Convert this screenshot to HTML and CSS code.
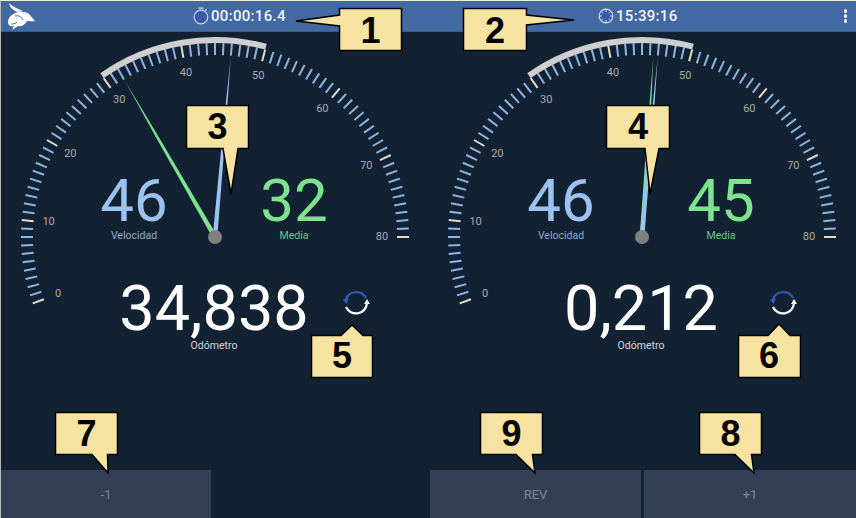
FILE: index.html
```html
<!DOCTYPE html>
<html lang="en">
<head>
  <meta charset="UTF-8" />
  <title>Odometro</title>
  <link rel="stylesheet" href="styles.css">
</head>
<body>
  <div class="page">
    <header class="top-bar">
      <div class="logo-area">
        <svg class="logo" viewBox="0 0 32 30" width="32" height="30">
          <path fill="#fff" d="M5 2 C9 6 14 8 19 10 L14 11 C10 10 6 7 5 2 Z"/>
          <path fill="#fff" d="M8 14 C13 10 21 10 25 13 L31 20 C28 21 25 20 23 20 C21 24 17 26 14 25 L8 29 L10 25 C6 26 4 24 4 21 C4 18 6 15 8 14 Z"/>
          <path fill="none" stroke="#4369a2" stroke-width="1" d="M11 15 C15 14 18 16 19 19 M13 21 C11 23 9 23 7 23"/>
        </svg>
      </div>
      <div class="clock">
        <svg viewBox="0 0 16 18" width="16" height="18">
          <rect x="5.5" y="0.5" width="5" height="1.3" fill="#c9d6ea"/>
          <path d="M12 3.5l1.5-1.2" stroke="#c9d6ea" stroke-width="1.2"/>
          <circle cx="8" cy="10" r="6.8" fill="#3a5ca8" stroke="#c9d6ea" stroke-width="1.2"/>
        </svg>
        <span>00:00:16.4</span>
      </div>
      <div class="clock">
        <svg viewBox="0 0 16 16" width="16" height="16">
          <circle cx="8" cy="8" r="6.8" fill="#3a5ca8" stroke="#d5deee" stroke-width="1.2"/>
          <path d="M8 2v2M8 12v2M2 8h2M12 8h2M3.8 3.8l1.4 1.4M10.8 10.8l1.4 1.4M3.8 12.2l1.4-1.4M10.8 5.2l1.4-1.4" stroke="#d5deee" stroke-width="1"/>
        </svg>
        <span>15:39:16</span>
      </div>
      <div class="menu-dots"><i></i><i></i><i></i></div>
    </header>

    <main class="panels">
      <section class="panel">
        <svg class="gauge" data-speed="5" data-avg="-30" viewBox="0 0 428 366" width="428" height="366"></svg>
        <div class="readings">
          <div class="speed-row">
            <div class="reading speed"><b>46</b><span>Velocidad</span></div>
            <div class="reading average"><b>32</b><span>Media</span></div>
          </div>
          <div class="odo-row">
            <div class="odo"><b>34,838</b><span>Odómetro</span></div>
            <svg class="reset" viewBox="0 0 28 28" width="28" height="28">
              <path d="M3.5 12 A11 11 0 0 1 24 9" fill="none" stroke="#3559b5" stroke-width="2.2"/>
              <path d="M0.8 10.5 L7 9.5 L4.5 15 Z" fill="#3559b5"/>
              <path d="M25 14 A11 11 0 0 1 4 18" fill="none" stroke="#fff" stroke-width="2.2"/>
              <path d="M22 15 L25 10 L28 15 Z" fill="#fff"/>
            </svg>
          </div>
        </div>
      </section>
      <section class="panel">
        <svg class="gauge" data-speed="5" data-avg="3.6" viewBox="0 0 428 366" width="428" height="366"></svg>
        <div class="readings">
          <div class="speed-row">
            <div class="reading speed"><b>46</b><span>Velocidad</span></div>
            <div class="reading average"><b>45</b><span>Media</span></div>
          </div>
          <div class="odo-row">
            <div class="odo"><b>0,212</b><span>Odómetro</span></div>
            <svg class="reset" viewBox="0 0 28 28" width="28" height="28">
              <path d="M3.5 12 A11 11 0 0 1 24 9" fill="none" stroke="#3559b5" stroke-width="2.2"/>
              <path d="M0.8 10.5 L7 9.5 L4.5 15 Z" fill="#3559b5"/>
              <path d="M25 14 A11 11 0 0 1 4 18" fill="none" stroke="#fff" stroke-width="2.2"/>
              <path d="M22 15 L25 10 L28 15 Z" fill="#fff"/>
            </svg>
          </div>
        </div>
      </section>
    </main>

    <footer class="button-row">
      <button class="pad-btn">-1</button>
      <div></div>
      <button class="pad-btn">REV</button>
      <button class="pad-btn">+1</button>
    </footer>
  </div>

  <!-- numbered callouts sit on top of the screenshot -->
  <svg class="callouts" viewBox="0 0 856 518" width="856" height="518">
    <g class="note">
      <path d="M339.5 8.5H401.5V50.5H339.5V26L296 21L339.5 15Z"/><text x="370.5" y="43">1</text>
      <path d="M463.5 8.5H526.5V15L574 20L526.5 25V50.5H463.5Z"/><text x="495" y="43">2</text>
      <path d="M186.5 105.5H248.5V148.5H238L231 194L223 148.5H186.5Z"/><text x="217.5" y="139">3</text>
      <path d="M606.5 105.5H669.5V148.5H659L650 194L645 148.5H606.5Z"/><text x="638" y="139">4</text>
      <path d="M311.5 335.5H341L352 325L363 335.5H372.5V377.5H311.5Z"/><text x="342" y="368">5</text>
      <path d="M738.5 335.5H768L779 324L790 335.5H800.5V377.5H738.5Z"/><text x="769" y="368">6</text>
      <path d="M55.5 412.5H117.5V454.5H107.5L108 473L92 454.5H55.5Z"/><text x="86.5" y="446">7</text>
      <path d="M699.5 412.5H761.5V454.5H751.5L754 473L735 454.5H699.5Z"/><text x="730.5" y="446">8</text>
      <path d="M480.5 412.5H542.5V454.5H532.5L535 473L516 454.5H480.5Z"/><text x="511.5" y="446">9</text>
    </g>
  </svg>

  <script>
    // Draw the dial of each gauge: 0 at lower left, 80 at 3 o'clock, 2.5 degrees a unit
    const NS = 'http://www.w3.org/2000/svg';
    const CX = 214, CY = 205;

    function polar(angle, r) {
      const rad = angle * Math.PI / 180;
      return [CX + r * Math.sin(rad), CY - r * Math.cos(rad)];
    }

    function add(svg, tag, attrs, text) {
      const el = document.createElementNS(NS, tag);
      for (const key in attrs) el.setAttribute(key, attrs[key]);
      if (text) el.textContent = text;
      svg.appendChild(el);
    }

    // needle keeps some body up to the middle, then runs out thin
    function needle(svg, angle, length, color) {
      const rad = angle * Math.PI / 180;
      const at = (along, side) => [
        CX + along * Math.sin(rad) + side * Math.cos(rad),
        CY - along * Math.cos(rad) + side * Math.sin(rad)
      ];
      const points = [at(0, -2.3), at(110, -1.3), at(length, 0), at(110, 1.3), at(0, 2.3)];
      add(svg, 'polygon', { points: points.join(' '), fill: color });
    }

    document.querySelectorAll('.gauge').forEach(svg => {
      for (let v = 0; v <= 80; v++) {
        const angle = -110 + v * 2.5;
        const major = v % 10 === 0;
        const p1 = polar(angle, 182);
        const p2 = polar(angle, 194);
        add(svg, 'line', {
          x1: p1[0], y1: p1[1], x2: p2[0], y2: p2[1],
          stroke: major ? '#e0ddd2' : '#8db4e2', 'stroke-width': 2
        });
        if (major) {
          const t = polar(angle, 167);
          add(svg, 'text', { x: t[0], y: t[1] + 3, class: 'dial-num' }, String(v));
        }
      }
      const s = polar(-35, 197), e = polar(15, 197);
      add(svg, 'path', {
        d: `M${s[0]} ${s[1]} A197 197 0 0 1 ${e[0]} ${e[1]}`,
        fill: 'none', stroke: '#cfcfcf', 'stroke-width': 6
      });
      needle(svg, Number(svg.dataset.avg), 180, '#7de38f');
      needle(svg, Number(svg.dataset.speed), 180, '#9cc2f0');
      add(svg, 'circle', { cx: CX, cy: CY, r: 7, fill: '#808080' });
    });
  </script>
</body>
</html>
```

FILE: styles.css
```css
* {
  box-sizing: border-box;
  font-family: Roboto, sans-serif;
}

body {
  margin: 0;
  background-color: #132232;
  color: white;
  overflow: hidden;
}

.page {
  width: 856px;
  height: 518px;
  border-top: 1px solid #eee;
  border-left: 1px solid #bbb;
  display: flex;
  flex-direction: column;
}

.top-bar {
  height: 31px;
  flex: none;
  background-color: #4369a2;
  border-bottom: 1px solid #3a5c8f;
  display: grid;
  grid-template-columns: 192px 405px 1fr 30px;
  align-items: center;
}

.logo-area {
  display: flex;
  align-items: center;
}

.logo {
  margin-left: 3px;
}

.clock {
  display: flex;
  align-items: center;
  gap: 2px;
  font-size: 15px;
  font-weight: 500;
  letter-spacing: 0.3px;
  color: #f1f4f9;
}

.menu-dots {
  justify-self: end;
  margin-right: 9px;
  display: flex;
  flex-direction: column;
  gap: 1.5px;
}

.menu-dots i {
  width: 3.5px;
  height: 3.5px;
  background-color: #f1f4f9;
  border-radius: 50%;
}

.panels {
  flex: 1;
  display: grid;
  grid-template-columns: 427px 428px;
}

.panel {
  display: grid;
}

.gauge {
  grid-area: 1 / 1;
}

.dial-num {
  font-size: 11px;
  fill: #a9abae;
  text-anchor: middle;
}

.readings {
  grid-area: 1 / 1;
  display: flex;
  flex-direction: column;
  align-items: center;
  padding-top: 141px;
}

.speed-row {
  display: flex;
  gap: 94px;
  width: 226px;
  margin-left: -2px;
}

.reading {
  display: flex;
  flex-direction: column;
  align-items: center;
  width: 66px;
}

.reading b {
  font-size: 60px;
  font-weight: 400;
  line-height: 56px;
}

.reading span {
  font-size: 10.5px;
  line-height: 13px;
  white-space: nowrap;
}

.speed {
  color: #9cc2f0;
}

.speed span {
  color: #8fabd0;
}

.average {
  color: #7de38f;
}

.average span {
  color: #6ec58a;
}

/* odometer stays centred on the dial, reset icon has a fixed place */
.odo-row {
  display: grid;
  width: 428px;
  margin-top: 36px;
  margin-left: -2px;
}

.odo {
  grid-area: 1 / 1;
  justify-self: center;
  display: flex;
  flex-direction: column;
  align-items: center;
}

.odo b {
  font-size: 63px;
  font-weight: 400;
  line-height: 61px;
}

.odo span {
  font-size: 10.5px;
  line-height: 13px;
  color: #d5d8dc;
}

.reset {
  grid-area: 1 / 1;
  justify-self: start;
  margin-left: 342px;
  margin-top: 11px;
}

.button-row {
  height: 48px;
  flex: none;
  display: grid;
  grid-template-columns: 210px 213px 211px 1fr;
  gap: 0 3px;
}

.pad-btn {
  background-color: #333f55;
  color: #7d8795;
  border: none;
  font-size: 13px;
  padding: 0;
}

.callouts {
  position: absolute;
  top: 0;
  left: 0;
}

.note path {
  fill: #f6e3a1;
  stroke: #000;
  stroke-width: 1.5;
}

.note text {
  font-family: "Liberation Sans", sans-serif;
  font-weight: bold;
  font-size: 36px;
  text-anchor: middle;
  fill: #000;
}
```
